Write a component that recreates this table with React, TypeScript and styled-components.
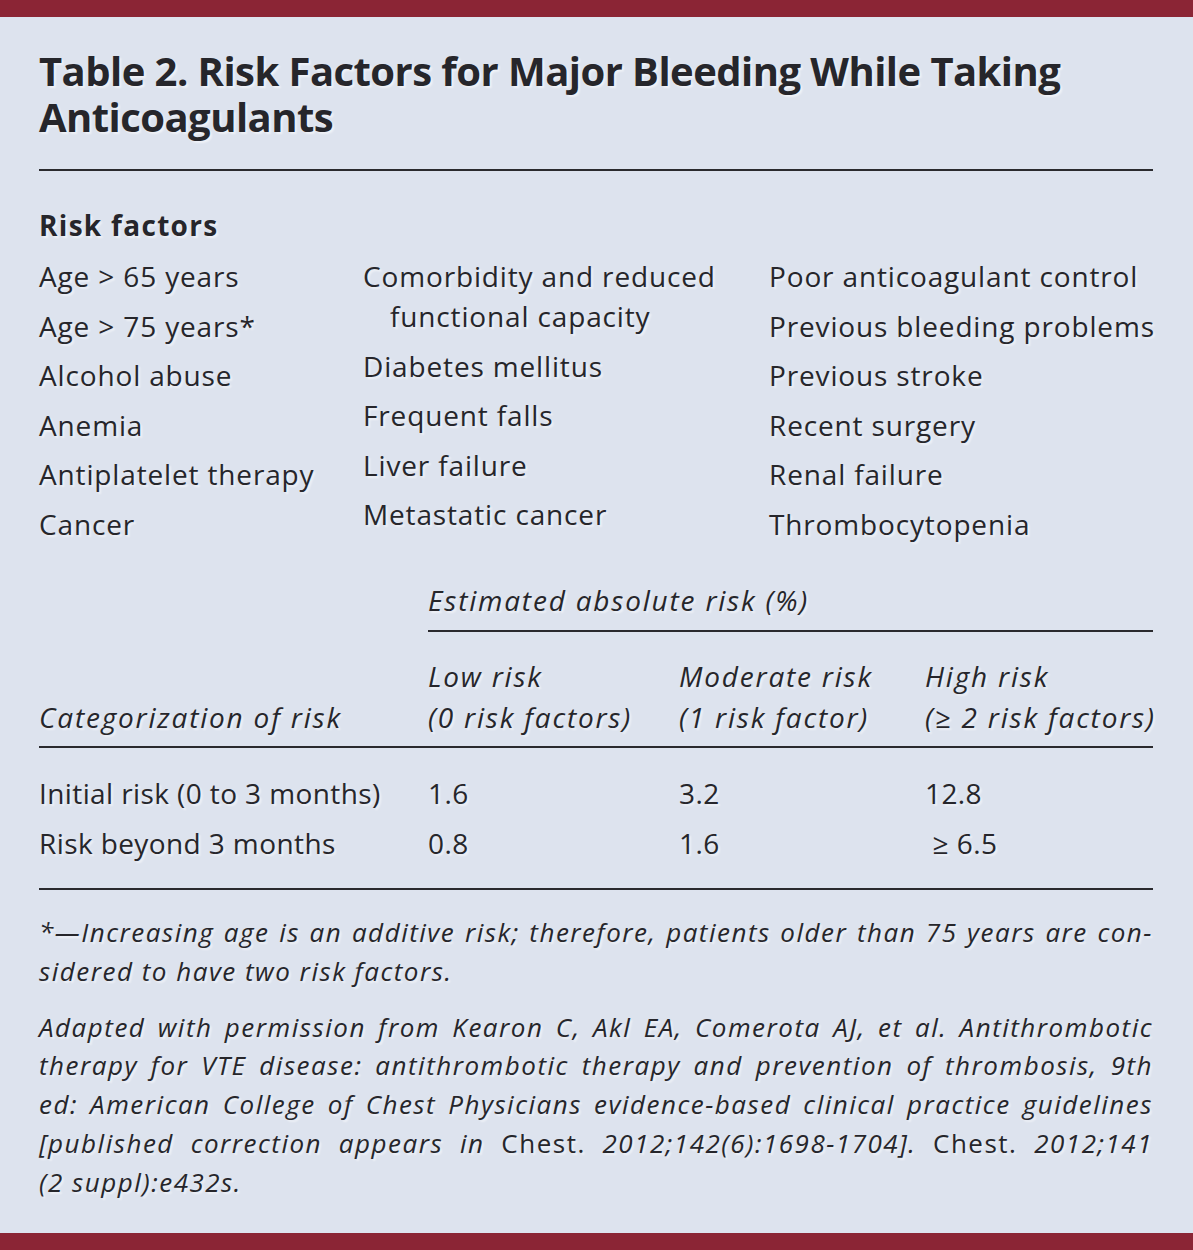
import React from "react";
import styled, { createGlobalStyle } from "styled-components";

const GlobalStyle = createGlobalStyle`
  html, body {
    margin: 0;
    padding: 0;
    background: #dde3ee;
  }
`;

const Page = styled.div`
  box-sizing: border-box;
  width: 1193px;
  height: 1250px;
  border-top: 17px solid #8b2535;
  border-bottom: 17px solid #8b2535;
  background: #dde3ee;
  padding: 0 40px 0 39px;
  font-family: "Open Sans", "Noto Sans", sans-serif;
  color: #26262b;
  text-shadow: 2px 2px 2px rgba(255, 255, 255, 0.55);
`;

const Title = styled.h1`
  margin: 0;
  padding: 31px 0 29px;
  font-size: 40px;
  line-height: 46px;
  font-weight: 700;
  letter-spacing: -0.55px;
  border-bottom: 2px solid #2a2a2e;
`;

const SectionHead = styled.h2`
  margin: 0;
  padding-top: 34px;
  font-size: 28px;
  line-height: 40px;
  font-weight: 700;
  letter-spacing: 1.3px;
`;

const FactorGrid = styled.div`
  display: grid;
  grid-template-columns: 324px 406px minmax(0, 1fr);
  margin-top: 11px;
`;

const FactorCol = styled.ul`
  list-style: none;
  margin: 0;
  padding: 0;
  display: flex;
  flex-direction: column;
  gap: 9.6px;
`;

const Factor = styled.li`
  font-size: 28px;
  line-height: 40px;
  letter-spacing: 0.85px;
  white-space: nowrap;
  padding-left: 27px;
  text-indent: -27px;
`;

const RiskTable = styled.div`
  display: grid;
  grid-template-columns: 389px 251px 246px minmax(0, 1fr);
  margin-top: 36px;
  font-size: 28px;
`;

const Cell = styled.div<{ $italic?: boolean; $span?: number; $rule?: boolean; $pad?: string }>`
  grid-column: ${(p) => (p.$span ? `span ${p.$span}` : "auto")};
  font-style: ${(p) => (p.$italic ? "italic" : "normal")};
  letter-spacing: 1.8px;
  line-height: 41px;
  white-space: nowrap;
  display: flex;
  flex-direction: column;
  justify-content: flex-end;
  padding: ${(p) => p.$pad || "0"};
  border-bottom: ${(p) => (p.$rule ? "2px solid #2a2a2e" : "none")};
`;

const BodyCell = styled.div<{ $last?: boolean }>`
  line-height: 50px;
  letter-spacing: 0.4px;
  white-space: nowrap;
  padding-bottom: ${(p) => (p.$last ? "20px" : "0")};
  border-bottom: ${(p) => (p.$last ? "2px solid #2a2a2e" : "none")};
  &:first-child {
    padding-top: 20px;
  }
`;

const Notes = styled.div`
  margin-top: 23px;
  font-size: 26px;
  line-height: 38.8px;
  font-style: italic;
  letter-spacing: 1.5px;
`;

const Para = styled.p`
  margin: 0 0 17px;
`;

const Line = styled.span<{ $last?: boolean }>`
  display: block;
  white-space: nowrap;
  text-align: justify;
  text-align-last: ${(p) => (p.$last ? "left" : "justify")};
`;

const Roman = styled.span`
  font-style: normal;
`;

const col1 = ["Age > 65 years", "Age > 75 years*", "Alcohol abuse", "Anemia", "Antiplatelet therapy", "Cancer"];
const col2 = [
  "Comorbidity and reduced functional capacity",
  "Diabetes mellitus",
  "Frequent falls",
  "Liver failure",
  "Metastatic cancer",
];
const col3 = [
  "Poor anticoagulant control",
  "Previous bleeding problems",
  "Previous stroke",
  "Recent surgery",
  "Renal failure",
  "Thrombocytopenia",
];

const rows = [
  ["Initial risk (0 to 3 months)", "1.6", "3.2", "12.8"],
  ["Risk beyond 3 months", "0.8", "1.6", "\u00a0\u2265 6.5"],
];

export default function App() {
  return (
    <>
      <GlobalStyle />
      <Page>
        <Title>
          Table 2. Risk Factors for Major Bleeding While Taking
          <br />
          Anticoagulants
        </Title>
        <SectionHead>Risk factors</SectionHead>
        <FactorGrid>
          {[col1, col2, col3].map((col, i) => (
            <FactorCol key={i}>
              {col.map((f) =>
                f.startsWith("Comorbidity") ? (
                  <Factor key={f}>
                    Comorbidity and reduced
                    <br />
                    functional capacity
                  </Factor>
                ) : (
                  <Factor key={f}>{f}</Factor>
                )
              )}
            </FactorCol>
          ))}
        </FactorGrid>

        <RiskTable>
          <Cell />
          <Cell $italic $span={3} $rule $pad="0 0 9px">
            Estimated absolute risk (%)
          </Cell>
          <Cell $italic $rule $pad="24px 0 8px">
            Categorization of risk
          </Cell>
          <Cell $italic $rule $pad="24px 0 8px">
            <span>Low risk</span>
            <span>(0 risk factors)</span>
          </Cell>
          <Cell $italic $rule $pad="24px 0 8px">
            <span>Moderate risk</span>
            <span>(1 risk factor)</span>
          </Cell>
          <Cell $italic $rule $pad="24px 0 8px">
            <span>High risk</span>
            <span>(≥ 2 risk factors)</span>
          </Cell>
          {[0, 1, 2, 3].map((c) => (
            <div key={c}>
              {rows.map((r, i) => (
                <BodyCell key={i} $last={i === rows.length - 1}>
                  {r[c]}
                </BodyCell>
              ))}
            </div>
          ))}
        </RiskTable>

        <Notes>
          <Para>
            <Line>*—Increasing age is an additive risk; therefore, patients older than 75 years are con-</Line>
            <Line $last>sidered to have two risk factors.</Line>
          </Para>
          <Para>
            <Line>Adapted with permission from Kearon C, Akl EA, Comerota AJ, et al. Antithrombotic</Line>
            <Line>therapy for VTE disease: antithrombotic therapy and prevention of thrombosis, 9th</Line>
            <Line>ed: American College of Chest Physicians evidence-based clinical practice guidelines</Line>
            <Line>
              [published correction appears in <Roman>Chest.</Roman> 2012;142(6):1698-1704].{" "}
              <Roman>Chest.</Roman> 2012;141
            </Line>
            <Line $last>(2 suppl):e432s.</Line>
          </Para>
        </Notes>
      </Page>
    </>
  );
}
